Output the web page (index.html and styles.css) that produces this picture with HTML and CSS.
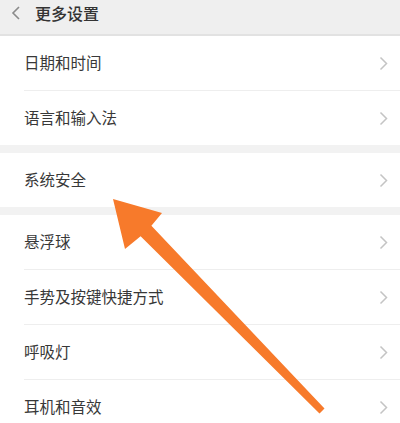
FILE: index.html
```html
<!DOCTYPE html>
<html lang="zh-CN">
<head>
<meta charset="utf-8">
<title>更多设置</title>
<link rel="stylesheet" href="styles.css">
</head>
<body>
<div class="page">
  <header class="topbar">
    <svg class="back" width="10" height="14" viewBox="0 0 10 14"><path d="M8 1 L2 7 L8 13" fill="none" stroke="#8a8a8a" stroke-width="1.6"/></svg>
    <span class="title">更多设置</span>
  </header>

  <section class="group">
    <div class="row"><span class="label">日期和时间</span><svg class="chev" width="9" height="15" viewBox="0 0 9 15"><path d="M1.5 1.5 L7.5 7.5 L1.5 13.5" fill="none" stroke="#c4c4c4" stroke-width="1.5"/></svg></div>
    <div class="row"><span class="label">语言和输入法</span><svg class="chev" width="9" height="15" viewBox="0 0 9 15"><path d="M1.5 1.5 L7.5 7.5 L1.5 13.5" fill="none" stroke="#c4c4c4" stroke-width="1.5"/></svg></div>
  </section>

  <section class="group">
    <div class="row"><span class="label">系统安全</span><svg class="chev" width="9" height="15" viewBox="0 0 9 15"><path d="M1.5 1.5 L7.5 7.5 L1.5 13.5" fill="none" stroke="#c4c4c4" stroke-width="1.5"/></svg></div>
  </section>

  <section class="group">
    <div class="row"><span class="label">悬浮球</span><svg class="chev" width="9" height="15" viewBox="0 0 9 15"><path d="M1.5 1.5 L7.5 7.5 L1.5 13.5" fill="none" stroke="#c4c4c4" stroke-width="1.5"/></svg></div>
    <div class="row"><span class="label">手势及按键快捷方式</span><svg class="chev" width="9" height="15" viewBox="0 0 9 15"><path d="M1.5 1.5 L7.5 7.5 L1.5 13.5" fill="none" stroke="#c4c4c4" stroke-width="1.5"/></svg></div>
    <div class="row"><span class="label">呼吸灯</span><svg class="chev" width="9" height="15" viewBox="0 0 9 15"><path d="M1.5 1.5 L7.5 7.5 L1.5 13.5" fill="none" stroke="#c4c4c4" stroke-width="1.5"/></svg></div>
    <div class="row"><span class="label">耳机和音效</span><svg class="chev" width="9" height="15" viewBox="0 0 9 15"><path d="M1.5 1.5 L7.5 7.5 L1.5 13.5" fill="none" stroke="#c4c4c4" stroke-width="1.5"/></svg></div>
  </section>

  <svg class="arrow" width="400" height="423" viewBox="0 0 400 423">
    <polygon fill="#f77a2b" points="113,199 162,213 151.4,225.8 324.5,408.6 319.5,413.4 140.6,236.2 125,249"/>
  </svg>
</div>
</body>
</html>
```

FILE: styles.css
```css
* { box-sizing: border-box; }
html, body {
  margin: 0;
  padding: 0;
  background: #f2f2f2;
  font-family: "Noto Sans CJK SC", "Noto Sans", sans-serif;
}
.page {
  position: relative;
  width: 400px;
  height: 423px;
  overflow: hidden;
}
.topbar {
  height: 36px;
  background: #efefef;
  border-bottom: 2px solid #e2e2e2;
  display: flex;
  align-items: center;
  padding: 0 0 8px 11px;
}
.back { margin-right: 14px; }
.title {
  font-size: 16px;
  font-weight: 500;
  color: #333;
  line-height: 1;
}
.group {
  background: #fff;
  margin-bottom: 8px;
}
.row {
  height: 55px;
  display: flex;
  align-items: center;
  justify-content: space-between;
  margin-left: 24px;
  padding-right: 12px;
  border-bottom: 1px solid #eeeeee;
}
.row:last-child { border-bottom: none; height: 54px; }
.label {
  font-size: 15.5px;
  color: #383838;
  line-height: 1;
}
.arrow {
  position: absolute;
  left: 0;
  top: 0;
  pointer-events: none;
}
```
